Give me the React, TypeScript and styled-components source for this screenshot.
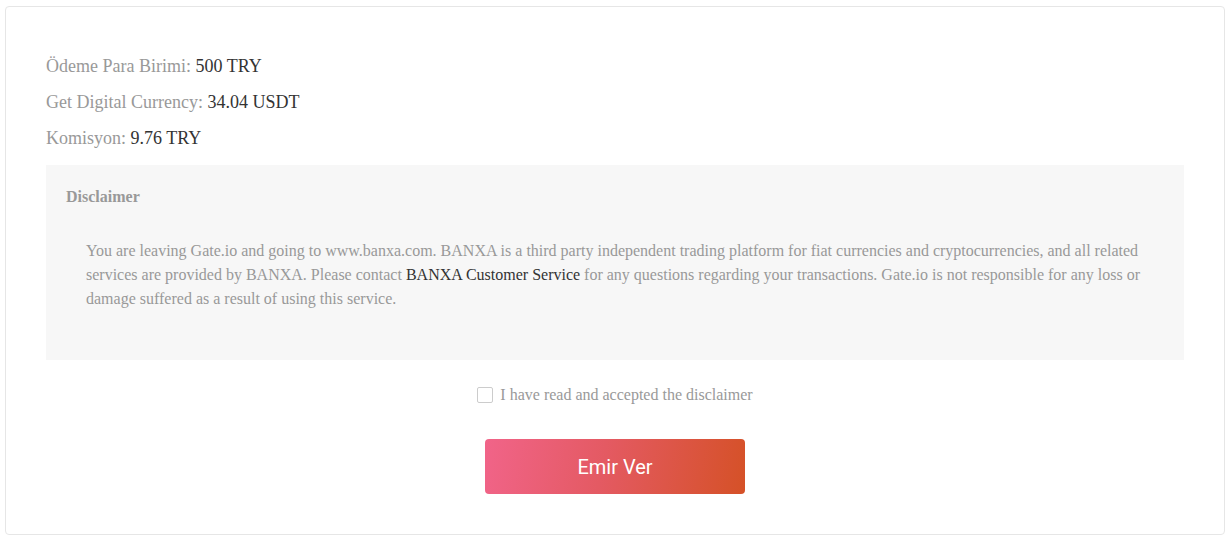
import { useState } from "react";
import styled, { createGlobalStyle } from "styled-components";

const GlobalStyle = createGlobalStyle`
  body {
    margin: 0;
    background: #fff;
    font-family: "Liberation Serif", "Times New Roman", serif;
  }
`;

const Card = styled.div`
  box-sizing: border-box;
  margin: 6px 0 0 5px;
  width: 1220px;
  height: 529px;
  border: 1px solid #e6e6e6;
  border-radius: 4px;
  padding: 41px 40px 0 40px;
  display: flex;
  flex-direction: column;
`;

const InfoRow = styled.div`
  font-size: 18px;
  line-height: 36px;
  color: #999;

  span {
    color: #333;
  }
`;

const DisclaimerBox = styled.div`
  margin-top: 9px;
  background: #f7f7f7;
  padding: 20px 20px 0;
  height: 195px;
  box-sizing: border-box;
`;

const DisclaimerTitle = styled.div`
  font-size: 16px;
  font-weight: bold;
  line-height: 24px;
  color: #999;
`;

const DisclaimerText = styled.p`
  margin: 30px 0 0 20px;
  font-size: 16px;
  line-height: 24px;
  color: #999;

  a {
    color: #333;
    text-decoration: none;
  }
`;

const AgreeRow = styled.label`
  margin-top: 26px;
  display: flex;
  align-items: center;
  justify-content: center;
  gap: 7px;
  font-size: 16px;
  line-height: 18px;
  color: #999;
  cursor: pointer;
`;

const Box = styled.span<{ $checked: boolean }>`
  width: 16px;
  height: 16px;
  box-sizing: border-box;
  border: 1px solid #ccc;
  border-radius: 2px;
  background: ${(p) => (p.$checked ? "#e25a4d" : "#fff")};
  display: inline-flex;
  align-items: center;
  justify-content: center;
`;

const SubmitButton = styled.button`
  margin: 35px auto 0;
  width: 260px;
  height: 55px;
  border: none;
  border-radius: 4px;
  background: linear-gradient(100deg, #f16489 0%, #e45a63 45%, #d55127 100%);
  color: #fff;
  font-family: Roboto, "Liberation Sans", Arial, sans-serif;
  font-size: 20px;
  cursor: pointer;
`;

const App = () => {
  const [checked, setChecked] = useState(false);

  return (
    <>
      <GlobalStyle />
      <Card>
        <InfoRow>
          Ödeme Para Birimi: <span>500 TRY</span>
        </InfoRow>
        <InfoRow>
          Get Digital Currency: <span>34.04 USDT</span>
        </InfoRow>
        <InfoRow>
          Komisyon: <span>9.76 TRY</span>
        </InfoRow>
        <DisclaimerBox>
          <DisclaimerTitle>Disclaimer</DisclaimerTitle>
          <DisclaimerText>
            You are leaving Gate.io and going to www.banxa.com. BANXA is a third
            party independent trading platform for fiat currencies and
            cryptocurrencies, and all related services are provided by BANXA.
            Please contact <a href="#">BANXA Customer Service</a> for any
            questions regarding your transactions. Gate.io is not responsible
            for any loss or damage suffered as a result of using this service.
          </DisclaimerText>
        </DisclaimerBox>
        <AgreeRow onClick={() => setChecked(!checked)}>
          <Box $checked={checked}>
            {checked && (
              <svg width="10" height="10" viewBox="0 0 10 10">
                <path d="M1.5 5l2.5 2.5 4.5-5" stroke="#fff" strokeWidth="1.5" fill="none" />
              </svg>
            )}
          </Box>
          I have read and accepted the disclaimer
        </AgreeRow>
        <SubmitButton>Emir Ver</SubmitButton>
      </Card>
    </>
  );
};

export default App;
